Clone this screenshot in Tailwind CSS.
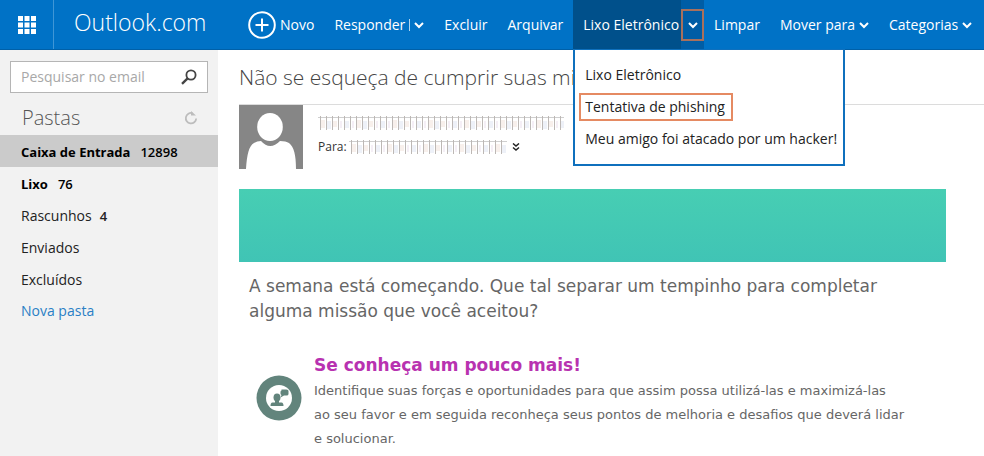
<!DOCTYPE html>
<html lang="pt-BR">
<head>
    <meta charset="UTF-8">
    <meta name="viewport" content="width=device-width, initial-scale=1.0">
    <title>Outlook.com</title>
    <script src="https://cdn.jsdelivr.net/npm/@tailwindcss/browser@4"></script>
</head>
<body class="flex min-h-screen flex-col bg-white font-['Open_Sans','Noto_Sans',sans-serif] text-sm text-[#333]">

<!-- Header -->
<header class="flex h-[50px] shrink-0 border-b border-[#0060a8] bg-[#0072c6] text-white">
    <button type="button" aria-label="Aplicativos" class="flex w-[54px] items-center justify-center border-r border-[#3f96d6]">
        <svg class="h-[18px] w-[18px]" viewBox="0 0 18 18" fill="currentColor">
            <path d="M0 0h5v5H0zM6.500 0h5v5h-5zM13 0h5v5h-5zM0 6.500h5v5H0zM6.500 6.500h5v5h-5zM13 6.500h5v5h-5zM0 13h5v5H0zM6.500 13h5v5h-5zM13 13h5v5h-5z"/>
        </svg>
    </button>
    <a href="#" class="flex w-[184px] items-center pb-1 pl-5 text-[23px] font-light">Outlook.com</a>

    <nav class="flex flex-1 whitespace-nowrap">
        <button type="button" class="flex items-center gap-1 px-[10px]">
            <svg class="h-7 w-7" viewBox="0 0 28 28" fill="none" stroke="currentColor" stroke-width="2">
                <circle cx="14" cy="14" r="12.800"/>
                <path d="M14 7.500v13M7.500 14h13"/>
            </svg>
            Novo
        </button>
        <div class="flex items-center gap-1 px-[10px]">
            <button type="button">Responder</button>
            <span class="h-3 w-px bg-white/70"></span>
            <button type="button" aria-label="Mais respostas">
                <svg class="h-[10px] w-[10px]" viewBox="0 0 10 10" fill="none" stroke="currentColor" stroke-width="2"><path d="M1 3l4 4 4-4"/></svg>
            </button>
        </div>
        <button type="button" class="px-[10px]">Excluir</button>
        <button type="button" class="px-[10px]">Arquivar</button>

        <div class="relative flex bg-[#00508b]">
            <button type="button" class="pr-[2px] pl-[10px]">Lixo Eletrônico</button>
            <button type="button" aria-label="Opções de lixo eletrônico" class="flex w-[23px] items-center bg-[#005da5]">
                <span class="flex h-8 w-full items-center justify-center border-2 border-[#a9705c]">
                    <svg class="h-[10px] w-[10px]" viewBox="0 0 10 10" fill="none" stroke="currentColor" stroke-width="2"><path d="M1 3l4 4 4-4"/></svg>
                </span>
            </button>

            <!-- Dropdown -->
            <ul class="absolute top-[49px] left-0 w-[272px] border-2 border-t border-[#0f70bd] bg-white py-[9px] text-[#222]">
                <li class="flex h-8 items-center px-1"><a href="#" class="border-2 border-transparent px-1">Lixo Eletrônico</a></li>
                <li class="flex h-8 items-center px-1"><a href="#" class="flex h-7 items-center border-2 border-[#e58a62] pr-[6px] pl-1">Tentativa de phishing</a></li>
                <li class="flex h-8 items-center px-1"><a href="#" class="border-2 border-transparent px-1">Meu amigo foi atacado por um hacker!</a></li>
            </ul>
        </div>

        <button type="button" class="px-[10px]">Limpar</button>
        <button type="button" class="flex items-center gap-1 px-[10px]">
            Mover para
            <svg class="h-[10px] w-[10px]" viewBox="0 0 10 10" fill="none" stroke="currentColor" stroke-width="2"><path d="M1 3l4 4 4-4"/></svg>
        </button>
        <button type="button" class="flex items-center gap-1 px-[10px]">
            Categorias
            <svg class="h-[10px] w-[10px]" viewBox="0 0 10 10" fill="none" stroke="currentColor" stroke-width="2"><path d="M1 3l4 4 4-4"/></svg>
        </button>
    </nav>
</header>

<div class="flex flex-1">
    <!-- Sidebar -->
    <aside class="w-[218px] shrink-0 bg-[#f2f2f2]">
        <form class="mx-[10px] mt-[11px] flex h-8 items-center border border-[#b5b5b5] bg-white px-[10px]">
            <input type="text" aria-label="Pesquisar no email" placeholder="Pesquisar no email" class="h-7 min-w-0 flex-1 leading-7 outline-none placeholder:text-[#a8a8a8]">
            <button type="button" aria-label="Pesquisar">
                <svg class="h-4 w-4" viewBox="0 0 16 16" fill="none" stroke="#444" stroke-width="1.800"><circle cx="10" cy="6" r="4.600"/><path d="M6.600 9.400L1 14.800" stroke-width="2.400"/></svg>
            </button>
        </form>
        <div class="flex h-[42px] items-center justify-between pt-2 pr-5 pl-[22px]">
            <h2 class="text-xl font-light text-[#555]">Pastas</h2>
            <button type="button" aria-label="Atualizar">
                <svg class="h-[14px] w-[14px]" viewBox="0 0 14 14" fill="none" stroke="#bdbdbd" stroke-width="1.800"><path d="M8.500 2.200A5.200 5.200 0 1 0 12.200 7.500"/><path d="M7 0v4.500h5z" fill="#bdbdbd" stroke="none"/></svg>
            </button>
        </div>
        <ul class="text-[#222]">
            <li><a href="#" class="flex h-8 items-center gap-[10px] bg-[#cbcbcb] pt-[2px] pl-[21px] text-[13px] font-bold text-black">Caixa de Entrada <span class="font-semibold">12898</span></a></li>
            <li><a href="#" class="flex h-8 items-center gap-[10px] pt-[2px] pl-[21px] text-[13px] font-bold text-black">Lixo <span class="font-semibold">76</span></a></li>
            <li><a href="#" class="flex h-8 items-center gap-2 pt-[2px] pl-[21px]">Rascunhos <span class="text-[13px] font-semibold">4</span></a></li>
            <li><a href="#" class="flex h-8 items-center pt-[2px] pl-[21px]">Enviados</a></li>
            <li><a href="#" class="flex h-8 items-center pt-[2px] pl-[21px]">Excluídos</a></li>
            <li><a href="#" class="flex h-8 items-center pl-[21px] text-[#2a80c5]">Nova pasta</a></li>
        </ul>
    </aside>

    <!-- Message -->
    <main class="min-w-0 flex-1 pl-[21px]">
        <h1 class="flex h-[54px] items-center text-[21px] font-light text-[#444]">Não se esqueça de cumprir suas mi</h1>

        <div class="flex border-t border-[#dcdcdc]">
            <svg class="h-16 w-16" viewBox="0 0 64 64">
                <path fill="#868686" d="M0 0h64v64H0z"/>
                <path fill="#fff" d="M7 64C8 49 10 41 15 38Q18 36 22 36Q31 46 41 36Q47 36 50 38C55 42 57 50 57 64z"/>
                <ellipse cx="31" cy="22" rx="12.800" ry="14" fill="#fff"/>
            </svg>
            <div class="flex flex-col gap-2 pt-[10px] pl-[15px]">
                <svg class="h-4 w-[246px]">
                    <defs>
                        <pattern id="strike" width="36" height="16" patternUnits="userSpaceOnUse">
                            <path d="M5 5v8M17 6v6" stroke="#f8f0ec" stroke-width="4"/>
                            <path d="M11 6v8M29 6v7" stroke="#eef1f8" stroke-width="4"/>
                            <path d="M23 6v7M35 6v7" stroke="#f5eff6" stroke-width="2"/>
                            <path d="M0 2.500h36" stroke="#cfcfcf"/>
                            <path d="M2.500 1v14M8.500 1v14M14.500 1v14M20.500 1v14M26.500 1v14M32.500 1v14" stroke="#bdb8b5"/>
                        </pattern>
                    </defs>
                    <rect width="246" height="16" fill="url(#strike)"/>
                </svg>
                <div class="flex h-4 items-center text-xs">
                    <span class="w-[31px]">Para:</span>
                    <svg class="h-4 w-[158px]"><rect width="158" height="16" fill="url(#strike)"/></svg>
                    <button type="button" aria-label="Mostrar detalhes" class="ml-[5px]">
                        <svg class="h-2 w-2" viewBox="0 0 8 8" fill="none" stroke="#222" stroke-width="1.500"><path d="M1 .5l3 2.500 3-2.500M1 4.500l3 2.500 3-2.500"/></svg>
                    </button>
                </div>
            </div>
        </div>

        <div class="mt-5 mr-[38px] h-[73px] bg-linear-to-b from-[#47ceb3] to-[#40c4b5]"></div>

        <div class="mr-[38px] pl-[10px] font-['DejaVu_Sans',sans-serif] text-[#666]">
            <p class="mt-3 text-[17px] leading-[25px]">A semana está começando. Que tal separar um tempinho para completar<br>alguma missão que você aceitou?</p>

            <section class="mt-[27px] flex gap-3 pl-[7px]">
                <svg class="mt-6 h-[46px] w-[46px] shrink-0" viewBox="0 0 46 46">
                    <circle cx="23" cy="23" r="22.500" fill="#62847c"/>
                    <circle cx="23" cy="23" r="13" fill="#fff"/>
                    <g fill="#62847c">
                        <ellipse cx="21" cy="22.500" rx="3.500" ry="4"/>
                        <path d="M19 25h4v2.500h2.500q2 0 2 3.500h-13q0-3.500 2-3.500H19z"/>
                        <path d="M25.500 14.500h5q2 0 2 1.500v3q0 1.500-2 1.500H28l-3.500 2 1-2.500q-1-.5-1-1.500v-1.500q0-1.500 1-1.500z"/>
                    </g>
                </svg>
                <div class="min-w-0">
                    <h3 class="text-[17px] leading-7 font-bold text-[#b832b0]">Se conheça um pouco mais!</h3>
                    <p class="text-[13px] leading-6">Identifique suas forças e oportunidades para que assim possa utilizá-las e maximizá-las<br>ao seu favor e em seguida reconheça seus pontos de melhoria e desafios que deverá lidar<br>e solucionar.</p>
                </div>
            </section>
        </div>
    </main>
</div>

</body>
</html>
